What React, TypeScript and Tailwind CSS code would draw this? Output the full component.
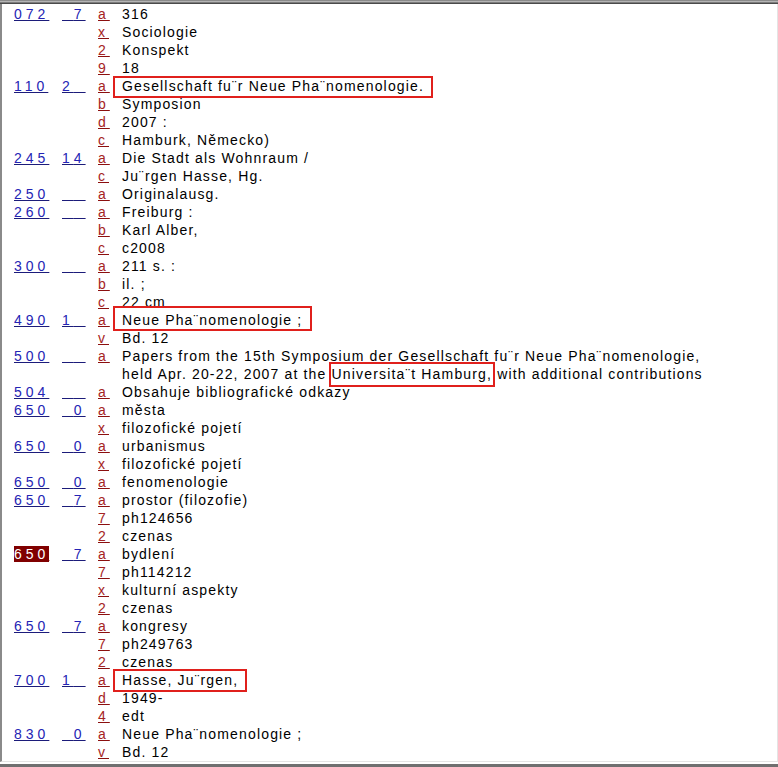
import React from "react";

type Sub = { code: string; value: React.ReactNode };
type Field = { tag: string; ind: [string, string]; subs: Sub[]; hl?: boolean };

const Box = ({ children, cls }: { children: React.ReactNode; cls: string }) => (
  <span className="relative inline-block">
    {children}
    <span className={"pointer-events-none absolute border-2 border-[#e0201c] " + cls} />
  </span>
);

const fields: Field[] = [
  {
    tag: "072",
    ind: [" ", "7"],
    subs: [
      { code: "a", value: "316" },
      { code: "x", value: "Sociologie" },
      { code: "2", value: "Konspekt" },
      { code: "9", value: "18" },
    ],
  },
  {
    tag: "110",
    ind: ["2", " "],
    subs: [
      {
        code: "a",
        value: (
          <Box cls="left-[-9px] top-[-1px] right-[-9px] bottom-[-3px]">
            Gesellschaft fu¨r Neue Pha¨nomenologie.
          </Box>
        ),
      },
      { code: "b", value: "Symposion" },
      { code: "d", value: "2007 :" },
      { code: "c", value: "Hamburk, Německo)" },
    ],
  },
  {
    tag: "245",
    ind: ["1", "4"],
    subs: [
      { code: "a", value: "Die Stadt als Wohnraum /" },
      { code: "c", value: "Ju¨rgen Hasse, Hg." },
    ],
  },
  { tag: "250", ind: [" ", " "], subs: [{ code: "a", value: "Originalausg." }] },
  {
    tag: "260",
    ind: [" ", " "],
    subs: [
      { code: "a", value: "Freiburg :" },
      { code: "b", value: "Karl Alber," },
      { code: "c", value: "c2008" },
    ],
  },
  {
    tag: "300",
    ind: [" ", " "],
    subs: [
      { code: "a", value: "211 s. :" },
      { code: "b", value: "il. ;" },
      { code: "c", value: "22 cm" },
    ],
  },
  {
    tag: "490",
    ind: ["1", " "],
    subs: [
      {
        code: "a",
        value: (
          <Box cls="left-[-9px] top-[-5px] right-[-10px] bottom-[-2px]">Neue Pha¨nomenologie ;</Box>
        ),
      },
      { code: "v", value: "Bd. 12" },
    ],
  },
  {
    tag: "500",
    ind: [" ", " "],
    subs: [
      {
        code: "a",
        value: (
          <>
            Papers from the 15th Symposium der Gesellschaft fu¨r Neue Pha¨nomenologie,
            <br />
            held Apr. 20-22, 2007 at the{" "}
            <Box cls="left-[-3px] top-[-3px] right-[-3px] bottom-[-4px]">Universita¨t Hamburg,</Box> with
            additional contributions
          </>
        ),
      },
    ],
  },
  { tag: "504", ind: [" ", " "], subs: [{ code: "a", value: "Obsahuje bibliografické odkazy" }] },
  {
    tag: "650",
    ind: [" ", "0"],
    subs: [
      { code: "a", value: "města" },
      { code: "x", value: "filozofické pojetí" },
    ],
  },
  {
    tag: "650",
    ind: [" ", "0"],
    subs: [
      { code: "a", value: "urbanismus" },
      { code: "x", value: "filozofické pojetí" },
    ],
  },
  { tag: "650", ind: [" ", "0"], subs: [{ code: "a", value: "fenomenologie" }] },
  {
    tag: "650",
    ind: [" ", "7"],
    subs: [
      { code: "a", value: "prostor (filozofie)" },
      { code: "7", value: "ph124656" },
      { code: "2", value: "czenas" },
    ],
  },
  {
    tag: "650",
    ind: [" ", "7"],
    hl: true,
    subs: [
      { code: "a", value: "bydlení" },
      { code: "7", value: "ph114212" },
      { code: "x", value: "kulturní aspekty" },
      { code: "2", value: "czenas" },
    ],
  },
  {
    tag: "650",
    ind: [" ", "7"],
    subs: [
      { code: "a", value: "kongresy" },
      { code: "7", value: "ph249763" },
      { code: "2", value: "czenas" },
    ],
  },
  {
    tag: "700",
    ind: ["1", " "],
    subs: [
      {
        code: "a",
        value: <Box cls="left-[-9px] top-[-2px] right-[-9px] bottom-[-3px]">Hasse, Ju¨rgen,</Box>,
      },
      { code: "d", value: "1949-" },
      { code: "4", value: "edt" },
    ],
  },
  {
    tag: "830",
    ind: [" ", "0"],
    subs: [
      { code: "a", value: "Neue Pha¨nomenologie ;" },
      { code: "v", value: "Bd. 12" },
    ],
  },
];

const Ind = ({ c }: { c: string }) =>
  c === " " ? <span className="text-transparent">0</span> : <span>{c}</span>;

export default function App() {
  return (
    <div className="flex h-[767px] w-[778px] flex-col overflow-hidden bg-white font-['Liberation_Sans',Arial,sans-serif] text-[14px] leading-[18px]">
      <div className="h-[1px] shrink-0 bg-[#8a8a8a]" />
      <div className="h-[1px] shrink-0 bg-[#b4b4b4]" />
      <div className="h-[1px] shrink-0 bg-[#7c7c7c]" />
      <div className="h-[1px] shrink-0 bg-[#4a4a4a]" />
      <div className="flex min-h-0 flex-1 flex-col border-b border-l-2 border-r border-b-[#e4e4e4] border-l-[#8a8a8a] border-r-[#e4e4e4] pl-[12px] pt-[1px]">
        {fields.map((f, i) => (
          <div key={i} className="flex">
            <div className="w-[48px] shrink-0">
              {f.hl ? (
                <span className="bg-[#800000] tracking-[4px] text-white underline decoration-[#800000]">
                  {f.tag}
                </span>
              ) : (
                <span className="tracking-[4px] text-[#2424b4] underline decoration-[#1c1c7a]">{f.tag}</span>
              )}
            </div>
            <div className="w-[36px] shrink-0">
              <span className="tracking-[4px] text-[#2424b4] underline decoration-[#1c1c7a]">
                <Ind c={f.ind[0]} />
                <Ind c={f.ind[1]} />
              </span>
            </div>
            <div className="flex flex-1 flex-col">
              {f.subs.map((s, j) => (
                <div key={j} className="flex">
                  <div className="w-[24px] shrink-0">
                    <span className="tracking-[4px] text-[#a52323] underline decoration-[#8b0f0f]">{s.code}</span>
                  </div>
                  <div className="flex-1 tracking-[1.16px] text-black">{s.value}</div>
                </div>
              ))}
            </div>
          </div>
        ))}
      </div>
      <div className="h-[2px] shrink-0 bg-white" />
      <div className="h-[3px] shrink-0 bg-[#707070]" />
    </div>
  );
}
